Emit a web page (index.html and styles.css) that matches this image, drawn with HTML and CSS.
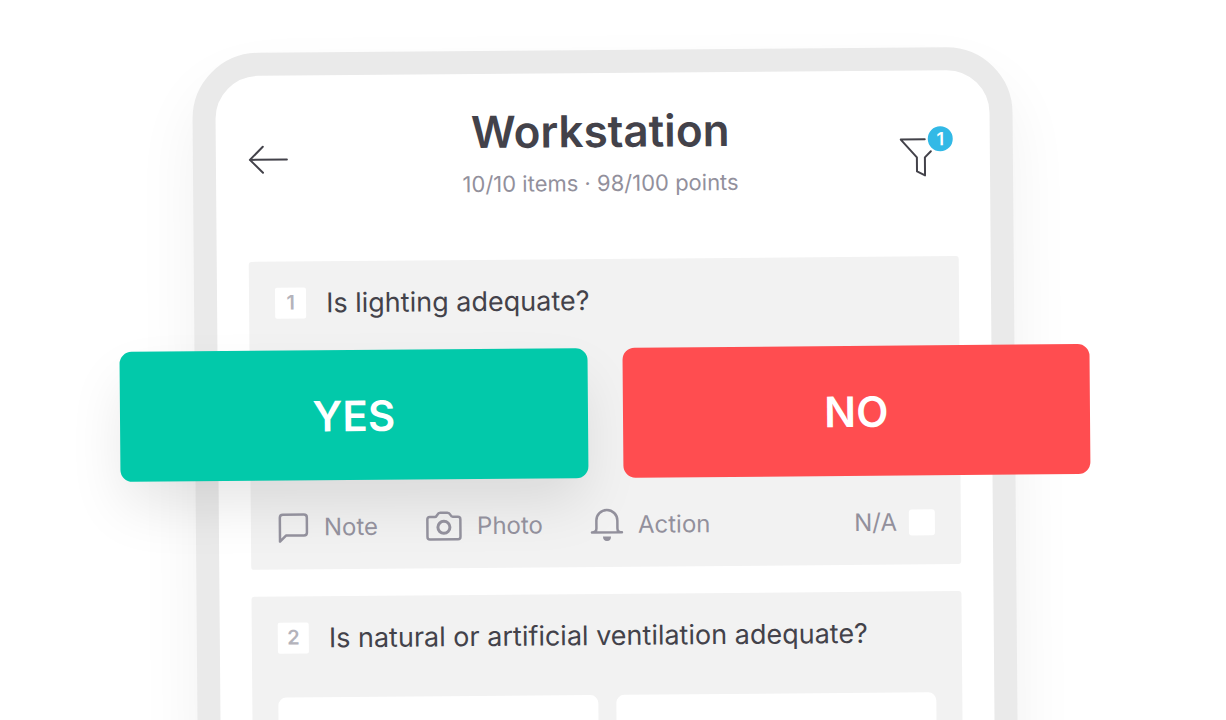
FILE: index.html
```
<!DOCTYPE html>
<html lang="en">
<head>
    <meta charset="UTF-8">
    <meta name="viewport" content="width=device-width, initial-scale=1">
    <title>Workstation</title>
    <link rel="stylesheet" href="styles.css">
</head>
<body>

<main class="phone">
    <header class="header">
        <button class="icon-button" type="button" aria-label="Back">
            <svg width="54" height="54" viewBox="0 0 54 54">
                <path d="M15 19 L2 32 L15 45 M2 32 H39" stroke-width="2"/>
            </svg>
        </button>
        <div class="heading">
            <h1>Workstation</h1>
            <p>10/10 items · 98/100 points</p>
        </div>
        <button class="icon-button filter" type="button" aria-label="Filter">
            <svg width="54" height="54" viewBox="0 0 54 54">
                <path d="M26 17 H2 L18 35 V49 L26 53 V35 L32 29" stroke-width="2"/>
            </svg>
            <span class="count">1</span>
        </button>
    </header>

    <section class="card">
        <div class="question">
            <span class="number">1</span>
            <h2>Is lighting adequate?</h2>
        </div>
        <div class="answers answers-large">
            <button class="answer yes" type="button">YES</button>
            <button class="answer no" type="button">NO</button>
        </div>
        <div class="actions">
            <button class="action" type="button">
                <svg width="32" height="32" viewBox="0 0 32 32">
                    <path d="M3 30 V6 Q3 3 6 3 H27 Q30 3 30 6 V21 Q30 24 27 24 H9 Z" stroke-width="2.5"/>
                </svg>
                Note
            </button>
            <button class="action" type="button">
                <svg width="36" height="32" viewBox="0 0 36 32">
                    <path d="M4 6.5 H9 Q10.5 6.5 11.5 4.5 Q12.5 2.5 14.5 2.5 H21.5 Q23.5 2.5 24.5 4.5 Q25.5 6.5 27 6.5 H32 Q34.5 6.5 34.5 9 V26.5 Q34.5 29 32 29 H4 Q1.5 29 1.5 26.5 V9 Q1.5 6.5 4 6.5 Z" stroke-width="2.5"/>
                    <circle cx="18" cy="17" r="6" stroke-width="3"/>
                </svg>
                Photo
            </button>
            <button class="action" type="button">
                <svg width="32" height="32" viewBox="0 0 32 32">
                    <path d="M1 23.5 Q5.5 23.500 5.5 19.5 V11.5 A10.500 10.500 0 0 1 26.500 11.500 V19.500 Q26.500 23.500 31 23.500 Z" stroke-width="2.5"/>
                    <path class="solid" d="M12 27.500 H20 Q20 32 16 32 Q12 32 12 27.500 Z"/>
                </svg>
                Action
            </button>
            <label class="not-applicable">
                N/A
                <input type="checkbox">
            </label>
        </div>
    </section>

    <section class="card">
        <div class="question">
            <span class="number">2</span>
            <h2>Is natural or artificial ventilation adequate?</h2>
        </div>
        <div class="answers">
            <button class="answer" type="button" aria-label="Yes"></button>
            <button class="answer" type="button" aria-label="No"></button>
        </div>
    </section>
</main>

</body>
</html>
```

FILE: styles.css
```
* { box-sizing: border-box; }
body {
    margin: 0;
    height: 100vh;
    padding: 50px 22px 0 0;
    overflow: hidden;
    background: #fff;
    color: #43424a;
    font-family: Inter, "Liberation Sans", sans-serif;
}
h1, h2, p { margin: 0; }
button {
    padding: 0;
    border: none;
    background: none;
    color: inherit;
    font: inherit;
    cursor: pointer;
}
svg {
    display: block;
    fill: none;
    stroke: currentColor;
    stroke-linecap: round;
    stroke-linejoin: round;
    overflow: visible;
}

/* the whole device leans slightly to the left */
.phone {
    max-width: 820px;
    margin: 0 auto;
    padding: 30px 32px;
    border: 23px solid #eaeaea;
    border-radius: 66px;
    background: #fff;
    box-shadow: 0 32px 64px rgba(0, 0, 0, 0.06);
    transform: rotate(-0.47deg);
    transform-origin: top center;
}

.header {
    display: flex;
    align-items: center;
    justify-content: space-between;
    margin-bottom: 58px;
}
.heading { text-align: center; }
.heading h1 {
    font-size: 44px;
    font-weight: 600;
    line-height: 56px;
}
.heading p {
    margin-top: 6px;
    color: #92909c;
    font-size: 22px;
    line-height: 36px;
}
.icon-button { position: relative; }
.icon-button.filter { margin-right: 5px; }
.count {
    position: absolute;
    top: 4px;
    right: 0;
    width: 25px;
    border-radius: 50%;
    background: #32b9e6;
    color: #fff;
    font-size: 18px;
    font-weight: 600;
    line-height: 25px;
    text-align: center;
}

.card {
    margin-bottom: 27px;
    padding: 26px;
    border-radius: 3px;
    background: #f2f2f2;
}
.question {
    display: flex;
    align-items: center;
    gap: 20px;
}
.question h2 {
    font-size: 27px;
    font-weight: 400;
    line-height: 31px;
}
.number {
    width: 31px;
    border-radius: 2px;
    background: #fff;
    color: #b4b3bb;
    font-size: 20px;
    font-weight: 600;
    line-height: 31px;
    text-align: center;
}

.answers {
    display: grid;
    grid-template-columns: 1fr 1fr;
    gap: 18px;
    margin-top: 44px;
}
.answer {
    height: 90px;
    border-radius: 8px;
    background: #fff;
}
.answers-large {
    gap: 35px;
    margin: 32px -156px 0;
}
.answers-large .answer {
    height: 130px;
    border-radius: 12px;
    color: #fff;
    font-size: 42px;
    font-weight: 600;
}
.answers-large .yes {
    background: #02c9aa;
    box-shadow: 0 28px 56px -4px rgba(0, 0, 0, 0.1);
}
.answers-large .no { background: #ff4d50; }

.actions {
    display: flex;
    align-items: center;
    gap: 48px;
    margin-top: 31px;
    color: #92909c;
    font-size: 24px;
    line-height: 32px;
}
.action {
    display: flex;
    align-items: center;
    gap: 15px;
}
.solid {
    fill: currentColor;
    stroke: none;
}
.not-applicable {
    display: flex;
    align-items: center;
    gap: 12px;
    margin-left: auto;
}
.not-applicable input {
    appearance: none;
    width: 26px;
    height: 26px;
    margin: 0;
    border-radius: 3px;
    background: #fff;
}
```
